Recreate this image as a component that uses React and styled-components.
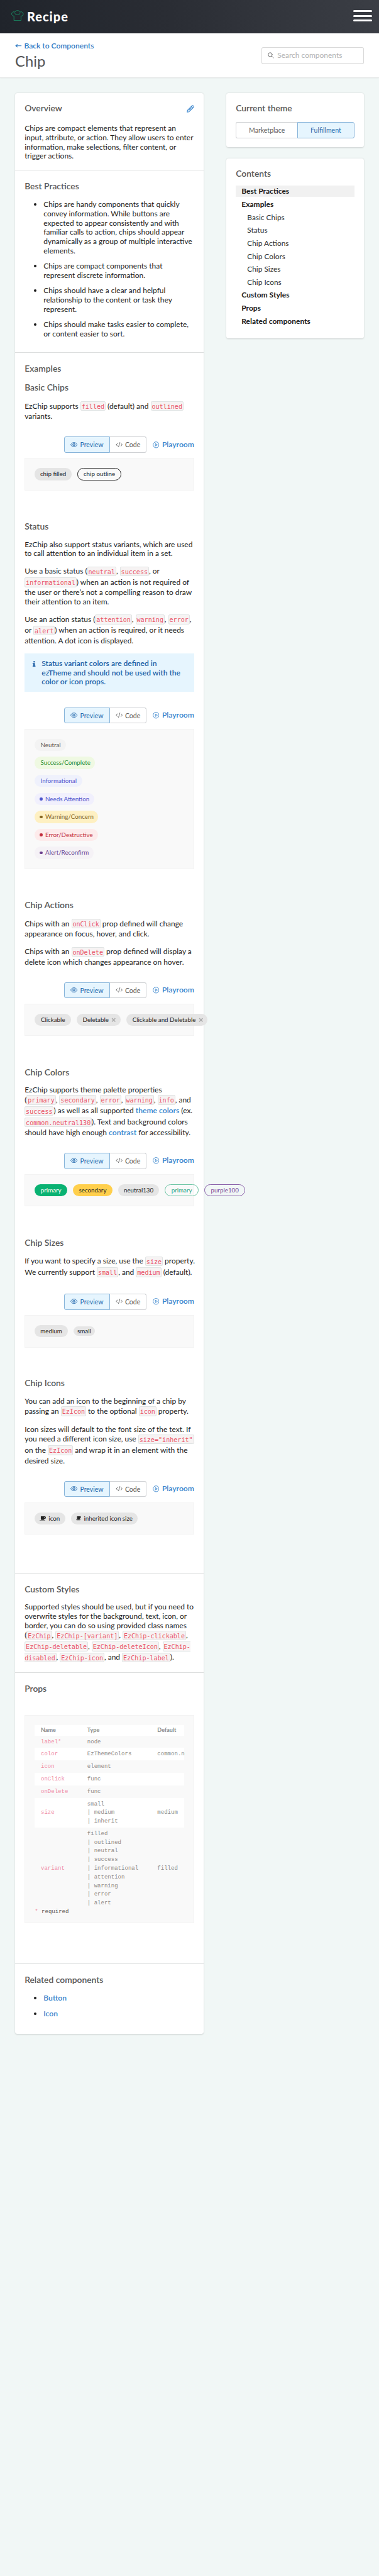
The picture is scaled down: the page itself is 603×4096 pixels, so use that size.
import React from "react";
import styled, { createGlobalStyle, css } from "styled-components";

const Global = createGlobalStyle`
  *, *::before, *::after { box-sizing: border-box; }
  html { background: #f1f7f6; }
  body { margin: 0; background: #f1f7f6; }
`;

const Page = styled.div`
  zoom: 0.7535;
  width: 800.3px;
  height: 5435px;
  overflow: hidden;
  background: #f1f7f6;
  color: #1c1c1c;
  font-family: Lato, "Liberation Sans", sans-serif;
  font-size: 15.92px;
  line-height: 19.5px;
`;

const TopBar = styled.header`
  height: 70px;
  padding: 0 14px 0 24px;
  display: flex;
  align-items: center;
  justify-content: space-between;
  background: linear-gradient(80deg, #20242b 0%, #2a2d34 45%, #3b3e45 100%);
`;

const Brand = styled.div`
  display: flex;
  align-items: center;
  gap: 7px;
  color: #fff;
  font-size: 26.5px;
  font-weight: 900;
  letter-spacing: 1.35px;
  line-height: 34px;
  padding-top: 1px;
  svg { margin-top: -6px; }
`;

const MenuButton = styled.div`
  width: 41px;
  display: flex;
  flex-direction: column;
  gap: 6px;
  margin-top: -3px;
`;

const MenuBar = styled.span`
  height: 4px;
  border-radius: 2px;
  background: #fff;
`;

const TitleBar = styled.div`
  height: 95px;
  padding: 16px 32px 0;
  display: flex;
  justify-content: space-between;
  align-items: flex-start;
  background: #fff;
  border-bottom: 1px solid #e3e6e6;
  box-shadow: 0 1px 2px rgba(0, 0, 0, 0.08);
`;

const BackLink = styled.a`
  display: flex;
  align-items: center;
  gap: 5px;
  color: #2f7ac3;
  font-size: 16px;
  font-weight: 600;
  line-height: 20px;
`;

const Title = styled.h1`
  margin: 4px 0 0;
  font-size: 31.6px;
  font-weight: 400;
  line-height: 38px;
  color: #545454;
`;

const SearchBox = styled.div`
  width: 216px;
  height: 35px;
  margin-top: 14px;
  padding: 0 12px;
  display: flex;
  align-items: center;
  gap: 7px;
  border: 1px solid #d9d9d9;
  border-bottom-color: #cfcfcf;
  border-radius: 4px;
  color: #b3b3b3;
  background: #fff;
  svg { margin-top: -2px; }
`;

const Columns = styled.main`
  display: flex;
  align-items: flex-start;
  gap: 48px;
  padding: 31.5px 32px 0;
`;

const Card = styled.section`
  background: #fff;
  border-radius: 5px;
  box-shadow: 0 1px 3px rgba(0, 0, 0, 0.16);
`;

const MainCard = styled(Card)`
  width: 398px;
  height: 4095.5px;
  flex: none;
`;

const Side = styled.aside`
  width: 290px;
  flex: none;
  display: flex;
  flex-direction: column;
  gap: 24px;
`;

const SideCard = styled(Card)`
  height: ${(p) => p.$h}px;
  padding: 20.5px 20px 0;
`;

const Section = styled.div`
  height: ${(p) => p.$h}px;
  padding: 20.5px 20px 0;
  & + & { border-top: 1px solid #dcdede; }
`;

const Heading = styled.h2`
  margin: 0 0 ${(p) => p.$gap ?? 16.5}px;
  display: flex;
  justify-content: space-between;
  align-items: center;
  font-size: 18.4px;
  font-weight: 600;
  line-height: 24px;
  color: #595959;
`;

const Text = styled.p`
  margin: 0 0 ${(p) => (p.$last ? 0 : 16)}px;
  white-space: nowrap;
`;

const Code = styled.code`
  padding: 2px 1.2px 1px;
  border: 1px solid #dfe3e3;
  border-radius: 3px;
  background: #f6f3f3;
  color: #ea5468;
  font-family: "DejaVu Sans Mono", monospace;
  font-size: 13.4px;
  line-height: 23.4px;
`;

const Link = styled.a`
  color: #3583cc;
  font-size: 16.1px;
  font-weight: 600;
`;

const List = styled.ul`
  margin: 0;
  padding: 0 0 0 40px;
  display: flex;
  flex-direction: column;
  gap: ${(p) => p.$gap}px;
  white-space: nowrap;
  li::marker { font-size: 18px; }
`;

const Example = styled.div`
  margin-bottom: ${(p) => p.$after ?? 64}px;
`;

const Tools = styled.div`
  height: 34px;
  margin: ${(p) => p.$gap ?? 32.5}px 0 11px;
  display: flex;
  align-items: center;
  justify-content: flex-end;
`;

const Toggle = styled.div`
  display: grid;
  grid-template-columns: ${(p) => p.$cols};
  height: 34px;
  font-size: 14px;
`;

const Option = styled.div`
  display: flex;
  align-items: center;
  justify-content: center;
  gap: 5px;
  padding-top: 1px;
  color: #5c5c5c;
  background: #fff;
  border: 1px solid #cfd1d4;
  border-radius: 4px;
  svg { margin-top: -2px; }
  &:first-child { border-top-right-radius: 0; border-bottom-right-radius: 0; border-right-width: ${(p) => (p.$on ? 1 : 0)}px; }
  &:last-child { border-top-left-radius: 0; border-bottom-left-radius: 0; border-left-width: ${(p) => (p.$on ? 1 : 0)}px; }
  ${(p) => p.$on && css`
    color: #2468ad;
    background: #e6f5fe;
    border-color: #87b4da;
  `}
`;

const Playroom = styled(Link)`
  margin-left: 13px;
  display: flex;
  align-items: center;
  gap: 6px;
  font-size: 16.2px;
`;

const Preview = styled.div`
  min-height: 68px;
  padding: 20px;
  display: flex;
  flex-direction: ${(p) => (p.$stack ? "column" : "row")};
  align-items: ${(p) => (p.$stack ? "flex-start" : "center")};
  gap: 12px;
  background: #f9f9f9;
  border: 1px solid #f3f3f3;
`;

const Chip = styled.span`
  flex: none;
  width: ${(p) => (p.$w ? p.$w + "px" : "auto")};
  height: ${(p) => (p.$small ? 20 : 26)}px;
  padding: 0 0 0 ${(p) => p.$start ?? 0}px;
  display: inline-flex;
  align-items: center;
  justify-content: ${(p) => (p.$start ? "flex-start" : "center")};
  gap: 6px;
  border-radius: 13px;
  border: 1px solid ${(p) => p.$line ?? "transparent"};
  background: ${(p) => p.$bg ?? "transparent"};
  color: ${(p) => p.$fg ?? "#242424"};
  font-size: 13px;
  line-height: 18px;
  white-space: nowrap;
`;

const Dot = styled.i`
  width: 6px;
  height: 6px;
  border-radius: 50%;
  background: currentColor;
`;

const Notice = styled.div`
  height: 81px;
  padding: 12px 16px;
  display: flex;
  align-items: flex-start;
  gap: 11px;
  background: #e6f5fe;
  color: #2161a6;
  font-size: 16px;
  font-weight: 600;
  white-space: nowrap;
  svg { margin: 4px 0 0 0; }
`;

const Contents = styled.nav`
  display: flex;
  flex-direction: column;
  gap: 4.4px;
`;

const Entry = styled.a`
  height: 23px;
  line-height: 23px;
  padding-left: ${(p) => (p.$sub ? 24 : 12)}px;
  font-size: ${(p) => (p.$sub ? 15.8 : 16)}px;
  font-weight: ${(p) => (p.$sub ? 400 : 700)};
  color: ${(p) => (p.$sub ? "#333" : "#1c1c1c")};
  background: ${(p) => (p.$active ? "#f1f1f1" : "transparent")};
`;

const TableBox = styled.div`
  height: 439px;
  padding: 20px;
  background: #f9f9f9;
  border: 1px solid #f3f3f3;
  font-family: "Liberation Mono", monospace;
  font-size: 12px;
  line-height: 18.3px;
`;

const Row = styled.div`
  display: grid;
  grid-template-columns: 98px 148px 58px;
  align-items: center;
  padding: ${(p) => (p.$head ? 0 : 4)}px 0 ${(p) => (p.$head ? 0 : 4)}px 13px;
  height: ${(p) => (p.$head ? "22.4px" : "auto")};
  background: ${(p) => (p.$white ? "#fff" : "transparent")};
  font-family: ${(p) => (p.$head ? "Lato, sans-serif" : "inherit")};
  font-weight: ${(p) => (p.$head ? 700 : 400)};
  color: #8a8a8a;
  white-space: pre;
`;

const Cell = styled.span`
  overflow: hidden;
`;

const PropName = styled.span`
  color: #f08ba2;
`;

const Required = styled.div`
  line-height: 9.5px;
  color: #555;
`;

const HatIcon = () => (
  <svg width="26" height="23" viewBox="0 0 26 23" fill="none" stroke="#1a8a63" strokeWidth="1.3" strokeLinejoin="round" strokeLinecap="round">
    <path d="M5.6 21.6V12.6C2.6 12.6 .8 10.6 .8 8.2C.8 5.4 3 3.6 5.4 3.7C6.4 3.7 7.2 4 7.8 4.4C8.6 2.2 10.6 .9 13 .9C15.4 .9 17.4 2.2 18.2 4.4C18.8 4 19.6 3.7 20.6 3.7C23 3.6 25.2 5.4 25.2 8.2C25.2 10.6 23.4 12.6 20.4 12.6V21.6Z" />
    <path d="M7.6 6.5C8 8.6 9.4 9.9 11 9.9C12 9.9 12.7 9.5 13 9C13.3 9.5 14 9.9 15 9.9C16.6 9.9 18 8.6 18.4 6.5" />
  </svg>
);
const ArrowIcon = () => (
  <svg width="14" height="10" viewBox="0 0 14 10" fill="none" stroke="currentColor" strokeWidth="1.5">
    <path d="M13.5 5H1.5M5 2L1.5 5L5 8" />
  </svg>
);
const SearchIcon = () => (
  <svg width="13" height="13" viewBox="0 0 13 13" fill="none" stroke="#6b6b6b" strokeWidth="1.3" strokeLinecap="round">
    <circle cx="5.2" cy="5.2" r="4.2" />
    <path d="M8.4 8.4L12 12" />
  </svg>
);
const PencilIcon = () => (
  <svg width="16" height="16" viewBox="0 0 16 16" fill="none" stroke="#3583cc" strokeWidth="1.4" strokeLinejoin="round">
    <path d="M1 15L1.8 11L11.6 1.2Q12.4 .6 13.2 1.2L14.8 2.8Q15.4 3.6 14.8 4.4L5 14.2ZM10 2.8L13.2 6M4.4 11.6L10.6 5.4" />
  </svg>
);
const EyeIcon = () => (
  <svg width="15" height="11" viewBox="0 0 15 11" fill="none" stroke="currentColor" strokeWidth="1.2">
    <path d="M.7 5.5C2.2 2.4 4.6 .8 7.5 .8S12.8 2.4 14.3 5.5C12.8 8.6 10.4 10.2 7.5 10.2S2.2 8.6 .7 5.5Z" />
    <circle cx="7.5" cy="5.5" r="2.6" />
    <path d="M7.3 4.4A1.1 1.1 0 1 1 6.4 5.5" />
  </svg>
);
const CodeIcon = () => (
  <svg width="15" height="11" viewBox="0 0 15 11" fill="none" stroke="currentColor" strokeWidth="1.2" strokeLinecap="round" strokeLinejoin="round">
    <path d="M4 2.6L1 5.5L4 8.4M11 2.6L14 5.5L11 8.4M8.9 .8L6.1 10.2" />
  </svg>
);
const PlayIcon = () => (
  <svg width="14" height="14" viewBox="0 0 14 14" fill="none" stroke="currentColor" strokeWidth="1.2" strokeLinejoin="round">
    <circle cx="7" cy="7" r="6.2" />
    <path d="M5.5 4.5L9.8 7L5.5 9.5Z" />
  </svg>
);
const InfoIcon = () => (
  <svg width="9" height="12" viewBox="0 0 9 12" fill="currentColor">
    <circle cx="4.4" cy="1.6" r="1.6" />
    <path d="M1.2 4.2H6V10H7.2V12H1.2V10H2.6V6.2H1.2Z" />
  </svg>
);
const CloseIcon = () => (
  <svg width="10" height="10" viewBox="0 0 10 10" fill="none" stroke="#a9a9a9" strokeWidth="1.9">
    <path d="M1.5 1.5L8.5 8.5M8.5 1.5L1.5 8.5" />
  </svg>
);
const MugIcon = ({ size = 13 }) => (
  <svg width={size} height={size * 0.8} viewBox="0 0 20 16" fill="currentColor">
    <path fillRule="evenodd" d="M4 0H16.5A3.5 3.5 0 0 1 16.5 8H15.5V9A3 3 0 0 1 12.5 12H7A3 3 0 0 1 4 9ZM15.5 2.2V5.8H16.5A1.8 1.8 0 0 0 16.5 2.2ZM0 13.5H18.5Q18 16 16 16H2.5Q.5 16 0 13.5Z" />
  </svg>
);

const ExampleTools = ({ gap }) => (
  <Tools $gap={gap}>
    <Toggle $cols="97px 77px">
      <Option $on><EyeIcon />Preview</Option>
      <Option><CodeIcon />Code</Option>
    </Toggle>
    <Playroom><PlayIcon />Playroom</Playroom>
  </Tools>
);

const grey = "#e5e5e5";

const statuses = [
  { label: "Neutral", fg: "#5c5c5c", bg: "#f3f3f3", w: 66 },
  { label: "Success/Complete", fg: "#1c8a2d", bg: "#eff9e2", w: 127 },
  { label: "Informational", fg: "#5359cf", bg: "#eff1fc", w: 100 },
  { label: "Needs Attention", fg: "#4d55cc", bg: "#f1f0fd", w: 126, dot: true },
  { label: "Warning/Concern", fg: "#85651f", bg: "#fef0c2", w: 134, dot: true },
  { label: "Error/Destructive", fg: "#c22e3d", bg: "#fdebeb", w: 134, dot: true },
  { label: "Alert/Reconfirm", fg: "#6a3c8c", bg: "#f5f2f6", w: 125, dot: true },
];

const contents = [
  ["Best Practices", false], ["Examples", false], ["Basic Chips", true], ["Status", true],
  ["Chip Actions", true], ["Chip Colors", true], ["Chip Sizes", true], ["Chip Icons", true],
  ["Custom Styles", false], ["Props", false], ["Related components", false],
];

const props = [
  ["label*", "node", ""],
  ["color", "EzThemeColors", "common.neutral130"],
  ["icon", "element", ""],
  ["onClick", "func", ""],
  ["onDelete", "func", ""],
  ["size", "small\n| medium\n| inherit", "medium"],
  ["variant", "filled\n| outlined\n| neutral\n| success\n| informational\n| attention\n| warning\n| error\n| alert", "filled"],
];

export default function App() {
  return (
    <>
      <Global />
      <Page>
        <TopBar>
          <Brand><HatIcon />Recipe</Brand>
          <MenuButton><MenuBar /><MenuBar /><MenuBar /></MenuButton>
        </TopBar>
        <TitleBar>
          <div>
            <BackLink><ArrowIcon />Back to Components</BackLink>
            <Title>Chip</Title>
          </div>
          <SearchBox><SearchIcon />Search components</SearchBox>
        </TitleBar>
        <Columns>
          <MainCard>
            <Section $h={162.5}>
              <Heading $gap={21}>Overview<PencilIcon /></Heading>
              <Text $last>
                Chips are compact elements that represent an<br />
                input, attribute, or action. They allow users to enter<br />
                information, make selections, filter content, or<br />
                trigger actions.
              </Text>
            </Section>
            <Section $h={384.5}>
              <Heading>Best Practices</Heading>
              <List $gap={11.5}>
                <li>Chips are handy components that quickly<br />convey information. While buttons are<br />expected to appear consistently and with<br />familiar calls to action, chips should appear<br />dynamically as a group of multiple interactive<br />elements.</li>
                <li>Chips are compact components that<br />represent discrete information.</li>
                <li>Chips should have a clear and helpful<br />relationship to the content or task they<br />represent.</li>
                <li>Chips should make tasks easier to complete,<br />or content easier to sort.</li>
              </List>
            </Section>
            <Section $h={2576}>
              <Heading>Examples</Heading>
              <Example>
                <Heading>Basic Chips</Heading>
                <Text $last>EzChip supports <Code>filled</Code> (default) and <Code>outlined</Code><br />variants.</Text>
                <ExampleTools />
                <Preview>
                  <Chip $w={78} $bg={grey}>chip filled</Chip>
                  <Chip $w={93} $line="#242424">chip outline</Chip>
                </Preview>
              </Example>
              <Example>
                <Heading>Status</Heading>
                <Text>EzChip also support status variants, which are used<br />to call attention to an individual item in a set.</Text>
                <Text>
                  Use a basic status (<Code>neutral</Code>, <Code>success</Code>, or<br />
                  <Code>informational</Code>) when an action is not required of<br />
                  the user or there’s not a compelling reason to draw<br />
                  their attention to an item.
                </Text>
                <Text>
                  Use an action status (<Code>attention</Code>, <Code>warning</Code>, <Code>error</Code>,<br />
                  or <Code>alert</Code>) when an action is required, or it needs<br />
                  attention. A dot icon is displayed.
                </Text>
                <Notice><InfoIcon /><div>Status variant colors are defined in<br />ezTheme and should not be used with the<br />color or icon props.</div></Notice>
                <ExampleTools gap={33} />
                <Preview $stack>
                  {statuses.map((s) => (
                    <Chip key={s.label} $w={s.w} $bg={s.bg} $fg={s.fg} $start={s.dot ? 9 : 11}>
                      {s.dot && <Dot />}{s.label}
                    </Chip>
                  ))}
                </Preview>
              </Example>
              <Example>
                <Heading>Chip Actions</Heading>
                <Text>Chips with an <Code>onClick</Code> prop defined will change<br />appearance on focus, hover, and click.</Text>
                <Text $last>Chips with an <Code>onDelete</Code> prop defined will display a<br />delete icon which changes appearance on hover.</Text>
                <ExampleTools />
                <Preview>
                  <Chip $w={77} $bg={grey}>Clickable</Chip>
                  <Chip $w={93} $bg={grey} $start={11}>Deletable<CloseIcon /></Chip>
                  <Chip $w={171} $bg={grey} $start={11}>Clickable and Deletable<CloseIcon /></Chip>
                </Preview>
              </Example>
              <Example>
                <Heading>Chip Colors</Heading>
                <Text $last>
                  EzChip supports theme palette properties<br />
                  (<Code>primary</Code>, <Code>secondary</Code>, <Code>error</Code>, <Code>warning</Code>, <Code>info</Code>, and<br />
                  <Code>success</Code>) as well as all supported <Link>theme colors</Link> (ex.<br />
                  <Code>common.neutral130</Code>). Text and background colors<br />
                  should have high enough <Link>contrast</Link> for accessibility.
                </Text>
                <ExampleTools />
                <Preview>
                  <Chip $w={69} $bg="#09b272" $fg="#fff">primary</Chip>
                  <Chip $w={83} $bg="#ffcf4c">secondary</Chip>
                  <Chip $w={87} $bg={grey}>neutral130</Chip>
                  <Chip $w={71} $line="#70c6a6" $fg="#31a580">primary</Chip>
                  <Chip $w={87} $line="#8b62aa" $fg="#77479b">purple100</Chip>
                </Preview>
              </Example>
              <Example $after={63}>
                <Heading>Chip Sizes</Heading>
                <Text $last>If you want to specify a size, use the <Code>size</Code> property.<br />We currently support <Code>small</Code>, and <Code>medium</Code> (default).</Text>
                <ExampleTools />
                <Preview>
                  <Chip $w={70} $bg={grey}>medium</Chip>
                  <Chip $w={45} $bg={grey} $small>small</Chip>
                </Preview>
              </Example>
              <Example>
                <Heading $gap={17.5}>Chip Icons</Heading>
                <Text>You can add an icon to the beginning of a chip by<br />passing an <Code>EzIcon</Code> to the optional <Code>icon</Code> property.</Text>
                <Text $last>
                  Icon sizes will default to the font size of the text. If<br />
                  you need a different icon size, use <Code>size="inherit"</Code><br />
                  on the <Code>EzIcon</Code> and wrap it in an element with the<br />
                  desired size.
                </Text>
                <ExampleTools />
                <Preview>
                  <Chip $w={65} $bg={grey} $start={9}><MugIcon />icon</Chip>
                  <Chip $w={140} $bg={grey} $start={9}><MugIcon size={10.5} />inherited icon size</Chip>
                </Preview>
              </Example>
            </Section>
            <Section $h={209.5}>
              <Heading>Custom Styles</Heading>
              <Text $last>
                Supported styles should be used, but if you need to<br />
                overwrite styles for the background, text, icon, or<br />
                border, you can do so using provided class names<br />
                (<Code>EzChip</Code>, <Code>EzChip-[variant]</Code>, <Code>EzChip-clickable</Code>,<br />
                <Code>EzChip-deletable</Code>, <Code>EzChip-deleteIcon</Code>, <Code>EzChip-<br />disabled</Code>, <Code>EzChip-icon</Code>, and <Code>EzChip-label</Code>).
              </Text>
            </Section>
            <Section $h={615}>
              <Heading $gap={44}>Props</Heading>
              <TableBox>
                <Row $head $white><span>Name</span><span>Type</span><span>Default</span></Row>
                {props.map(([name, type, value], i) => (
                  <Row key={name} $white={i % 2 === 1}>
                    <PropName>{name}</PropName><span>{type}</span><Cell>{value}</Cell>
                  </Row>
                ))}
                <Required><PropName>*</PropName> required</Required>
              </TableBox>
            </Section>
            <Section $h={148}>
              <Heading>Related components</Heading>
              <List $gap={11.8}>
                <li><Link>Button</Link></li>
                <li><Link>Icon</Link></li>
              </List>
            </Section>
          </MainCard>
          <Side>
            <SideCard $h={114}>
              <Heading $gap={17}>Current theme</Heading>
              <Toggle $cols="130px 120px">
                <Option>Marketplace</Option>
                <Option $on>Fulfillment</Option>
              </Toggle>
            </SideCard>
            <SideCard $h={379}>
              <Heading $gap={13}>Contents</Heading>
              <Contents>
                {contents.map(([label, sub], i) => (
                  <Entry key={label} $sub={sub} $active={i === 0}>{label}</Entry>
                ))}
              </Contents>
            </SideCard>
          </Side>
        </Columns>
      </Page>
    </>
  );
}
